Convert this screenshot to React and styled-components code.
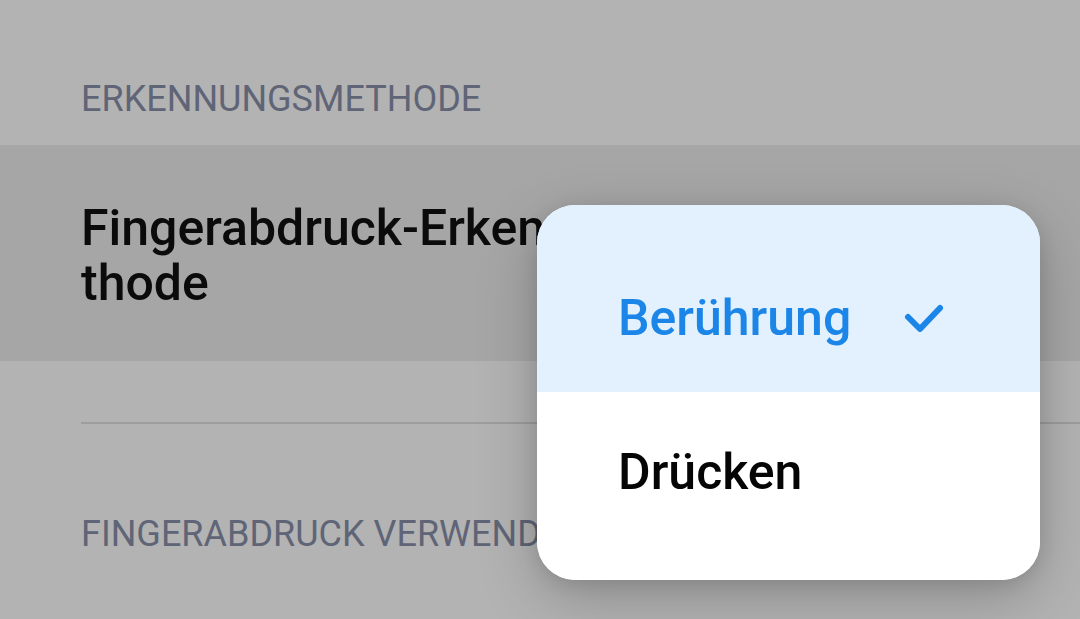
import React from "react";
import styled, { createGlobalStyle } from "styled-components";

const Global = createGlobalStyle`
  html, body { margin: 0; padding: 0; }
  body {
    background: #b3b3b3;
    font-family: Roboto, "Noto Sans", sans-serif;
    overflow: hidden;
  }
`;

const Screen = styled.div`
  position: relative;
  width: 1080px;
  height: 619px;
  background: #b3b3b3;
  overflow: hidden;
`;

const SectionHeader = styled.div`
  padding: ${(p) => p.$top}px 0 0 81px;
  font-size: 36px;
  line-height: 48px;
  font-weight: 400;
  color: #5f6576;
  white-space: nowrap;
  height: ${(p) => (p.$height ? `${p.$height}px` : "auto")};
  box-sizing: border-box;
`;

const Row = styled.div`
  height: 216px;
  box-sizing: border-box;
  padding: 56px 0 0 81px;
  background: #a6a6a6;
`;

const RowTitle = styled.div`
  font-size: 50px;
  line-height: 55px;
  font-weight: 500;
  color: #0b0b0b;
  white-space: nowrap;
`;

const DividerBlock = styled.div`
  padding: 61px 0 0 81px;
`;

const Divider = styled.div`
  height: 2px;
  background: #9d9d9d;
`;

const Popup = styled.div`
  position: absolute;
  left: 537px;
  top: 205px;
  width: 503px;
  height: 375px;
  border-radius: 38px;
  overflow: hidden;
  background: #ffffff;
  box-shadow: 0 18px 60px rgba(0, 0, 0, 0.22), 0 4px 18px rgba(0, 0, 0, 0.1);
  display: flex;
  flex-direction: column;
`;

const Option = styled.div`
  display: flex;
  align-items: flex-start;
  gap: 48px;
  height: ${(p) => p.$height}px;
  box-sizing: border-box;
  padding: ${(p) => p.$top}px 0 0 81px;
  background: ${(p) => (p.$selected ? "#e3f1fe" : "#ffffff")};
  color: ${(p) => (p.$selected ? "#1b86e8" : "#050505")};
  font-size: 50px;
  line-height: 60px;
  font-weight: 500;
`;

const Check = styled.svg`
  width: 48px;
  height: 48px;
  margin-top: 5px;
  flex-shrink: 0;
`;

export default function App() {
  return (
    <Screen>
      <Global />
      <SectionHeader $top={75} $height={145}>ERKENNUNGSMETHODE</SectionHeader>
      <Row>
        <RowTitle>Fingerabdruck-Erkennungsme</RowTitle>
        <RowTitle>thode</RowTitle>
      </Row>
      <DividerBlock>
        <Divider />
      </DividerBlock>
      <SectionHeader $top={86}>FINGERABDRUCK VERWENDEN FÜR</SectionHeader>
      <Popup>
        <Option $selected $height={187} $top={83}>
          <span>Berührung</span>
          <Check viewBox="0 0 48 48">
            <path
              d="M9 24 L21 36 L41 15"
              fill="none"
              stroke="#1b86e8"
              strokeWidth="6"
              strokeLinecap="round"
              strokeLinejoin="round"
            />
          </Check>
        </Option>
        <Option $height={188} $top={50}>
          <span>Drücken</span>
        </Option>
      </Popup>
    </Screen>
  );
}
